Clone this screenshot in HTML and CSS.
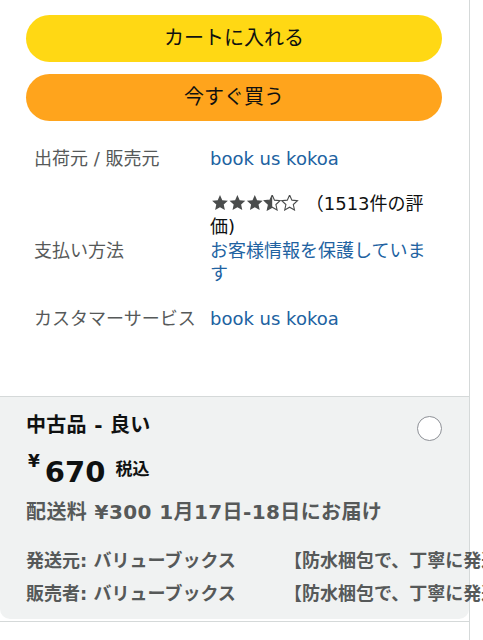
FILE: index.html
```html
<!DOCTYPE html>
<html lang="ja">
<head>
<meta charset="utf-8">
<link rel="stylesheet" href="styles.css">
</head>
<body>
<div class="page">
  <div class="buy">
    <div class="btn btn-cart">カートに入れる</div>
    <div class="btn btn-now">今すぐ買う</div>
  </div>
  <div class="details">
    <div class="row">
      <div class="label">出荷元 / 販売元</div>
      <div class="value link">book us kokoa</div>
    </div>
    <div class="row">
      <div class="label"></div>
      <div class="value rating"><svg class="stars" width="88" height="16" viewBox="0 0 88 16" aria-hidden="true">
          <defs>
            <path id="star" d="M8 0 L10.29 5.14 L15.89 5.74 L11.71 9.51 L12.88 15.01 L8 12.2 L3.12 15.01 L4.29 9.51 L0.11 5.74 L5.71 5.14 Z"/>
            <clipPath id="half"><rect x="52" y="0" width="8.2" height="16"/></clipPath>
          </defs>
          <use href="#star" x="0" class="full"/>
          <use href="#star" x="17.4" class="full"/>
          <use href="#star" x="34.8" class="full"/>
          <use href="#star" x="52.2" class="empty"/>
          <g clip-path="url(#half)"><use href="#star" x="52.2" class="full"/></g>
          <use href="#star" x="69.6" class="empty"/>
        </svg> （1513件の評価)</div>
    </div>
    <div class="row row-tight">
      <div class="label">支払い方法</div>
      <div class="value link">お客様情報を保護しています</div>
    </div>
    <div class="row">
      <div class="label">カスタマーサービス</div>
      <div class="value link">book us kokoa</div>
    </div>
  </div>
  <div class="offer">
    <div class="offer-head">
      <div class="condition">中古品 - 良い</div>
      <div class="radio"></div>
    </div>
    <div class="price">
      <span class="yen">¥</span>
      <span class="amount">670</span>
      <span class="tax">税込</span>
    </div>
    <div class="ship">配送料 ¥300 1月17日-18日にお届け</div>
    <div class="sellers">
      <div>発送元: バリューブックス</div>
      <div>【防水梱包で、丁寧に発送いたします】</div>
      <div>販売者: バリューブックス</div>
      <div>【防水梱包で、丁寧に発送いたします】</div>
    </div>
  </div>
  <div class="next"></div>
</div>
</body>
</html>
```
FILE: styles.css
```css
html {
  overflow-x: hidden;
}
body {
  margin: 0;
  font-family: "DejaVu Sans", "Noto Sans CJK JP", sans-serif;
  color: #0f1111;
  background: #fff;
}
.page {
  width: 469px;
  min-height: 640px;
  border-right: 1px solid #d5d9d9;
}
.buy {
  display: flex;
  flex-direction: column;
  gap: 12px;
  padding: 15px 0 0 26px;
}
.btn {
  width: 416px;
  height: 47px;
  line-height: 47px;
  border-radius: 24px;
  text-align: center;
  font-size: 20px;
  color: #0f1111;
}
.btn-cart {
  background: #ffd814;
}
.btn-now {
  background: #ffa41c;
}
.details {
  padding: 4px 0 66px 34px;
  font-size: 18px;
  line-height: 23px;
}
.row {
  display: grid;
  grid-template-columns: 176px 220px;
  margin-top: 22px;
}
.row-tight {
  margin-top: 1px;
}
.label {
  color: #565959;
  white-space: nowrap;
}
.link {
  color: #2162a1;
}
.rating {
  color: #0f1111;
}
.stars {
  vertical-align: -1px;
  margin-left: 2px;
}
.stars .full {
  fill: #4a4c4c;
}
.stars .empty {
  fill: none;
  stroke: #4a4c4c;
  stroke-width: 1.1;
}
.offer {
  border-top: 1px solid #d5d9d9;
  background: #f0f2f2;
  border-radius: 0 0 10px 10px;
  padding: 14px 27px 9px 26px;
}
.offer-head {
  display: flex;
  justify-content: space-between;
  align-items: flex-start;
}
.condition {
  font-size: 20px;
  line-height: 28px;
  font-weight: bold;
  letter-spacing: 0.3px;
}
.radio {
  width: 25px;
  height: 25px;
  box-sizing: border-box;
  border: 1.5px solid #8d9096;
  border-radius: 50%;
  background: #fff;
  margin-top: 5px;
}
.price {
  display: flex;
  align-items: flex-start;
  margin-top: 13px;
  font-weight: bold;
}
.yen {
  font-size: 17px;
  line-height: 17px;
  margin-top: -1px;
  margin-left: 2px;
}
.amount {
  font-size: 29px;
  line-height: 29px;
  margin-top: 4px;
  margin-left: 5px;
}
.tax {
  font-size: 17px;
  line-height: 17px;
  margin-top: 7px;
  margin-left: 10px;
}
.ship {
  margin-top: 11px;
  font-size: 20px;
  line-height: 28px;
  font-weight: bold;
  color: #565959;
  white-space: nowrap;
  letter-spacing: 0.4px;
}
.sellers {
  display: grid;
  grid-template-columns: 258px auto;
  margin-top: 18px;
  font-size: 18px;
  line-height: 33px;
  font-weight: bold;
  color: #565959;
  white-space: nowrap;
}
.next {
  margin-top: 2px;
  border-top: 1px solid #d5d9d9;
}
```
